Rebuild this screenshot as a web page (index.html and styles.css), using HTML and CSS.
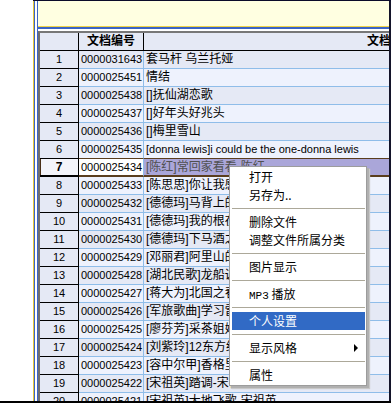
FILE: index.html
```html
<!DOCTYPE html>
<html>
<head>
<meta charset="utf-8">
<link rel="stylesheet" href="styles.css">
</head>
<body>
<div class="app">
  <div class="side"></div>
  <div class="right">
    <div class="split"></div>
    <div class="main">
      <div class="note"></div>
      <div class="note-line"></div>
      <div class="grid">
        <div class="row head">
          <div class="rh"></div>
          <div class="num hd">文档编号</div>
          <div class="title hd">文档名称</div>
        </div>
        <div class="row odd"><div class="rh">1</div><div class="num">0000031643</div><div class="title">套马杆 乌兰托娅</div></div>
        <div class="row even"><div class="rh">2</div><div class="num">0000025451</div><div class="title">情结</div></div>
        <div class="row odd"><div class="rh">3</div><div class="num">0000025438</div><div class="title">[]抚仙湖恋歌</div></div>
        <div class="row even"><div class="rh">4</div><div class="num">0000025437</div><div class="title">[]好年头好兆头</div></div>
        <div class="row odd"><div class="rh">5</div><div class="num">0000025436</div><div class="title">[]梅里雪山</div></div>
        <div class="row even pre-cur"><div class="rh">6</div><div class="num">0000025435</div><div class="title lat">[donna lewis]i could be the one-donna lewis</div></div>
        <div class="row cur"><div class="rh">7</div><div class="num">0000025434</div><div class="title">[陈红]常回家看看-陈红</div></div>
        <div class="row even"><div class="rh">8</div><div class="num">0000025433</div><div class="title">[陈思思]你让我感动</div></div>
        <div class="row odd"><div class="rh">9</div><div class="num">0000025432</div><div class="title">[德德玛]马背上的骑手</div></div>
        <div class="row even"><div class="rh">10</div><div class="num">0000025431</div><div class="title">[德德玛]我的根在草原</div></div>
        <div class="row odd"><div class="rh">11</div><div class="num">0000025430</div><div class="title">[德德玛]下马酒之歌</div></div>
        <div class="row even"><div class="rh">12</div><div class="num">0000025429</div><div class="title">[邓丽君]阿里山的姑娘</div></div>
        <div class="row odd"><div class="rh">13</div><div class="num">0000025428</div><div class="title">[湖北民歌]龙船调</div></div>
        <div class="row even"><div class="rh">14</div><div class="num">0000025427</div><div class="title">[蒋大为]北国之春</div></div>
        <div class="row odd"><div class="rh">15</div><div class="num">0000025426</div><div class="title">[军旅歌曲]学习雷锋好榜样</div></div>
        <div class="row even"><div class="rh">16</div><div class="num">0000025425</div><div class="title">[廖芬芳]采茶姐妹</div></div>
        <div class="row odd"><div class="rh">17</div><div class="num">0000025424</div><div class="title">[刘紫玲]12东方红</div></div>
        <div class="row even"><div class="rh">18</div><div class="num">0000025423</div><div class="title">[容中尔甲]香格里拉</div></div>
        <div class="row odd"><div class="rh">19</div><div class="num">0000025422</div><div class="title">[宋祖英]踏调-宋祖英</div></div>
        <div class="row even"><div class="rh">20</div><div class="num">0000025421</div><div class="title">[宋祖英]大地飞歌-宋祖英</div></div>
      </div>
    </div>
  </div>
</div>

<div class="menu">
  <div class="mi">打开</div>
  <div class="mi">另存为..</div>
  <div class="sep"></div>
  <div class="mi">删除文件</div>
  <div class="mi">调整文件所属分类</div>
  <div class="sep"></div>
  <div class="mi">图片显示</div>
  <div class="sep"></div>
  <div class="mi"><span class="mono">MP3</span> 播放</div>
  <div class="sep"></div>
  <div class="mi active">个人设置</div>
  <div class="sep"></div>
  <div class="mi sub">显示风格</div>
  <div class="sep"></div>
  <div class="mi">属性</div>
</div>
</body>
</html>
```

FILE: styles.css
```css
* { box-sizing: border-box; }
html, body {
  margin: 0;
  padding: 0;
  background: #fff;
}
body {
  width: 391px;
  height: 403px;
  overflow: hidden;
  position: relative;
  font-family: "Liberation Sans", "Noto Sans CJK SC", sans-serif;
  font-size: 12px;
  color: #000;
}
.app {
  display: flex;
  width: 391px;
  height: 403px;
  border-bottom: 2px solid #000;
}
.side {
  width: 33px;
  flex: none;
  background: #fff;
}
.right {
  flex: 1;
  display: flex;
  border-top: 1px solid #0b0b2a;
  min-width: 0;
}
.split {
  width: 5px;
  flex: none;
  background: linear-gradient(to right, #e6c83a 0 1px, #3b64c4 1px 2px, #fff 2px 4px, #3b64c4 4px 5px);
}
.main {
  flex: 1;
  min-width: 0;
  display: flex;
  flex-direction: column;
  border-right: 2px solid #14142a;
}
.note {
  height: 26px;
  flex: none;
  background: #ffffe1;
  border-bottom: 1px solid #efd449;
}
.note-line {
  height: 4px;
  flex: none;
  border-top: 2px solid #3b64c4;
  background: #fff;
}
.grid {
  flex: 1;
  overflow: hidden;
  border-top: 2px solid #777;
  border-left: 2px solid #6f6f6f;
  background: #eef2fd;
}
.row {
  display: flex;
  height: 18px;
  width: max-content;
}
.row > div {
  flex: none;
  height: 18px;
  line-height: 17px;
  white-space: nowrap;
  overflow: hidden;
}
.rh {
  width: 39px;
  text-align: center;
  font-size: 11px;
  background: #e5e9f5;
  border-right: 1px solid #000;
  border-bottom: 1px solid #000;
}
.num {
  width: 65px;
  padding-left: 2px;
  font-size: 11px;
  border-right: 1px solid #8fbde9;
  border-bottom: 1px solid #8fbde9;
}
.title {
  width: 492px;
  padding-left: 2px;
  border-bottom: 1px solid #8fbde9;
}
.title.lat { font-size: 11px; }
.odd .num, .odd .title { background: #e5e9f5; }
.even .num, .even .title { background: #eef2fd; }

.head > div {
  background: #e5e9f5;
  border-bottom: 1px solid #000;
}
.head .num {
  border-right: 1px solid #000;
  padding-left: 0;
}
.hd {
  text-align: center;
  font-weight: bold;
  font-size: 12px;
}

.pre-cur > div { border-bottom-color: #5a3e1e; }
.pre-cur .rh { border-bottom-color: #000; }
.cur > div {
  border-bottom: 2px solid #5a3e1e;
}
.cur .rh {
  background: #f3f4fa;
  font-weight: bold;
  font-size: 12px;
  border-bottom: 2px solid #000;
  box-shadow: inset 1px 0 0 #4a3018;
}
.cur .num {
  background: #fff;
  border-right-color: #8fbde9;
}
.cur .title {
  background: #aaa6d9;
  color: #505050;
}

.menu {
  position: absolute;
  left: 229px;
  top: 166px;
  width: 138px;
  background: #fff;
  border: 1px solid #9c9c9c;
  padding: 1px 1px 1px 2px;
  box-shadow: 2px 2px 0 #b0b0b0, 3px 3px 1px #c8c8c8;
  font-family: "Noto Sans CJK SC", "Liberation Sans", sans-serif;
  font-size: 12px;
}
.mi {
  position: relative;
  height: 18px;
  line-height: 18px;
  padding-left: 17px;
  white-space: nowrap;
}
.mi.active {
  background: #316ac5;
  color: #fff;
}
.mono {
  font-family: "Liberation Mono", monospace;
  font-size: 11px;
}
.sub::after {
  content: "";
  position: absolute;
  right: 7px;
  top: 5px;
  border-left: 4px solid #000;
  border-top: 4px solid transparent;
  border-bottom: 4px solid transparent;
}
.sep {
  height: 1px;
  margin: 4px 0 4px 0;
  background: #aca899;
}
```
